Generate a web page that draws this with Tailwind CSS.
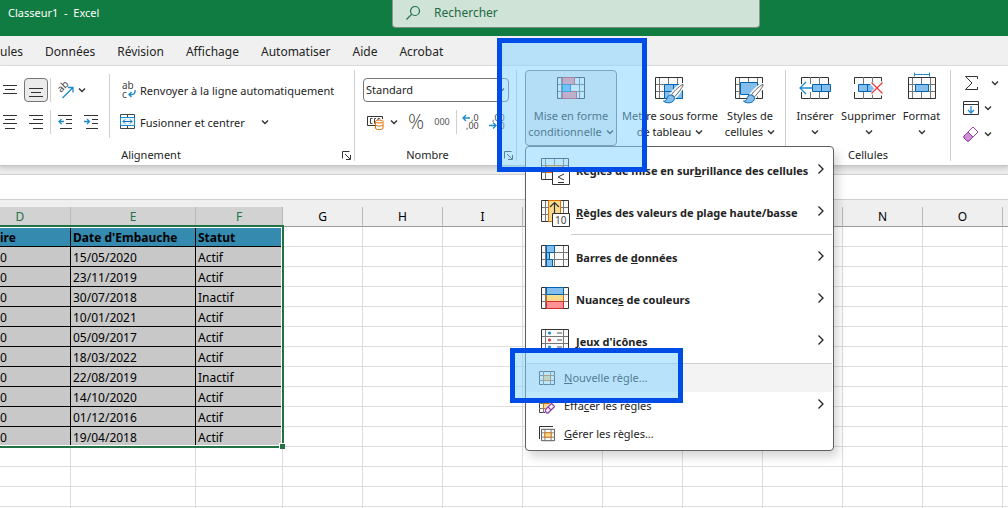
<!DOCTYPE html>
<html lang="fr">
<head>
    <meta charset="UTF-8">
    <meta name="viewport" content="width=device-width, initial-scale=1.0">
    <title>Classeur1 - Excel</title>
    <script src="https://cdn.jsdelivr.net/npm/@tailwindcss/browser@4"></script>
</head>

<body class="bg-white font-['Noto_Sans','Open_Sans',sans-serif] text-[11px] leading-4 text-[#242424]">
    <!-- shared icons -->
    <svg class="hidden">
        <symbol id="down" viewBox="0 0 8 6"><path d="M1 1.500l3 3 3-3" fill="none" stroke="#333" stroke-width="1.400"/></symbol>
        <symbol id="right" viewBox="0 0 8 12"><path d="M1.500 1.500L6 6l-4.500 4.500" fill="none" stroke="#222" stroke-width="1.300"/></symbol>
        <symbol id="launcher" viewBox="0 0 9 9"><path d="M.5 7.500V.5h7M3 3l5 5M8.500 4v4.500H4" fill="none" stroke="#333"/></symbol>
        <symbol id="grid" viewBox="0 0 30 28">
            <path d="M1.500 1.500h27v21h-27z" fill="#fafafa"/>
            <path d="M5.500 1v22M14.500 1v22M23.500 1v22M1 8.500h28M1 15.500h28" fill="none" stroke="#777"/>
            <path d="M1.500 1.500h27v21h-27z" fill="none" stroke="#333"/>
        </symbol>
        <symbol id="brush" viewBox="0 0 22 22">
            <path d="M20.500 1.500c-2 0-9 6.500-12 10.500l3 2.500c3.500-3.500 9.500-11 9-13z" fill="#fff" stroke="#fff" stroke-width="4"/>
            <path d="M20.500 1.500c-2 0-9 6.500-12 10.500l3 2.500c3.500-3.500 9.500-11 9-13z" fill="#fafafa" stroke="#555"/>
            <path d="M8 12.500c-3 0-4 2-4.500 4-.3 1.500-1.500 2.500-3.500 2.500 3 2.500 9 2.500 11-1 1-2 .3-3.500-.5-4z" fill="#83beec" stroke="#0063b1"/>
        </symbol>
        <symbol id="smallgrid" viewBox="0 0 16 16">
            <path d="M.5 1.500h15v13H.5z" fill="#fafafa" stroke="#444"/>
            <path d="M4.500 1v14M11.500 1v14M0 5.500h16M0 10.500h16" fill="none" stroke="#777"/>
            <path d="M4.500 5.500h7v5h-7z" fill="#f8db8f" stroke="#e07000"/>
        </symbol>
    </svg>

    <div class="flex h-screen flex-col overflow-hidden">
        <!-- title bar -->
        <header class="flex h-9 shrink-0 items-start bg-[#107c41]">
            <h1 class="w-[392px] shrink-0 pt-1 pl-2 text-[11px] leading-[18px] whitespace-pre text-white">Classeur1  -  Excel</h1>
            <label class="flex h-7 w-[368px] items-center gap-[13px] rounded-b border border-t-0 border-[#8a9a8f] border-b-[#7c8a80] bg-[#cfe3d7] pb-[2px] pl-3">
                <svg class="size-4 shrink-0" viewBox="0 0 16 16" fill="none" stroke="#1d7044" stroke-width="1.200"><circle cx="10" cy="6" r="4.500"/><path d="M6.800 9.200L1.500 14.500"/></svg>
                <input type="search" placeholder="Rechercher" aria-label="Rechercher" class="w-full text-xs outline-none placeholder:text-[#1d6a42]">
            </label>
        </header>

        <!-- tabs -->
        <nav class="flex h-[30px] shrink-0 items-center gap-[22px] border-b border-[#e4e4e4] bg-[#f0f0f0] pt-[3px] text-xs">
            <a href="#">ules</a>
            <a href="#">Données</a>
            <a href="#">Révision</a>
            <a href="#">Affichage</a>
            <a href="#">Automatiser</a>
            <a href="#">Aide</a>
            <a href="#">Acrobat</a>
        </nav>

        <!-- ribbon -->
        <div class="relative z-10 flex h-[100px] shrink-0 border-b border-[#c6c6c6] bg-white py-1 shadow-[0_2px_5px_rgba(0,0,0,0.16)]">
            <section class="relative flex w-[355px] shrink-0 flex-col border-r border-[#d0d0d0]">
                <div class="flex h-[68px] pt-1">
                    <div class="w-[110px] shrink-0 border-r border-[#d0d0d0]">
                        <div class="flex h-8 items-center">
                            <button aria-label="Aligner au centre" class="w-6 shrink-0 pl-[3px]"><svg class="h-4 w-[14px]" viewBox="0 0 14 16" stroke="#333"><path d="M0 3.500h14M2 7.500h10M0 11.500h14"/></svg></button>
                            <button aria-label="Aligner en bas" class="flex size-6 shrink-0 items-center justify-center rounded border border-[#767676] bg-[#ebebeb]"><svg class="h-4 w-[14px]" viewBox="0 0 14 16" stroke="#333"><path d="M0 6.500h14M2 10.500h10M0 14.500h14"/></svg></button>
                            <span class="ml-[2px] h-6 w-px bg-[#d0d0d0]"></span>
                            <button aria-label="Orientation" class="ml-[6px] flex items-center gap-1">
                                <svg class="h-4 w-[17px] overflow-visible" viewBox="0 0 17 16" fill="none"><text font-size="10" fill="#444" transform="translate(4 11) rotate(-45)">ab</text><path d="M5.500 16L16 5.500M11 5.500h5v5" stroke="#1e8bcd" stroke-width="1.300"/></svg>
                                <svg class="h-[6px] w-2"><use href="#down"/></svg>
                            </button>
                        </div>
                        <div class="flex h-8 items-center">
                            <button aria-label="Centrer" class="w-6 shrink-0 pl-[3px]"><svg class="h-4 w-[14px]" viewBox="0 0 14 16" stroke="#333"><path d="M0 1.500h14M2 5.500h10M0 9.500h14M2 14.500h10"/></svg></button>
                            <button aria-label="Aligner à droite" class="w-6 shrink-0 pl-[5px]"><svg class="h-4 w-[14px]" viewBox="0 0 14 16" stroke="#333"><path d="M0 1.500h14M4 5.500h10M0 9.500h14M4 14.500h10"/></svg></button>
                            <span class="ml-[2px] h-6 w-px bg-[#d0d0d0]"></span>
                            <button aria-label="Diminuer le retrait" class="ml-[7px]"><svg class="h-4 w-[14px]" viewBox="0 0 14 16" fill="none" stroke="#333"><path d="M0 1.500h14M8 5.500h6M8 9.500h6M2 14.500h12"/><path d="M6 7.500H1M3.500 5L1 7.500 3.500 10" stroke="#1e8bcd" stroke-width="1.300"/></svg></button>
                            <button aria-label="Augmenter le retrait" class="ml-3"><svg class="h-4 w-[14px]" viewBox="0 0 14 16" fill="none" stroke="#333"><path d="M0 1.500h14M8 5.500h6M8 9.500h6M2 14.500h12"/><path d="M0 7.500h5M3 5l2.500 2.500L3 10" stroke="#1e8bcd" stroke-width="1.300"/></svg></button>
                        </div>
                    </div>
                    <div class="pl-[10px]">
                        <button class="flex h-8 items-center gap-1 whitespace-nowrap">
                            <svg class="h-[18px] w-4 overflow-visible" viewBox="0 0 16 18" fill="none"><text x="2" y="8" font-size="10" fill="#444">ab</text><text x="2" y="17" font-size="10" fill="#444">c</text><path d="M15 9c.5 3-1 4.500-3 4.500H9M11.500 11L9 13.500l2.500 2.500" stroke="#1e8bcd" stroke-width="1.400"/></svg>
                            <span class="pt-px">Renvoyer à la ligne automatiquement</span>
                        </button>
                        <button class="flex h-8 items-center gap-1 whitespace-nowrap">
                            <svg class="size-4" viewBox="0 0 16 16" fill="none"><path d="M.5.5h14v14H.5zM7.500 0v3M7.500 12v3" stroke="#444"/><path d="M.5 3.500h14v8H.5z" fill="#e8f4fc" stroke="#1e8bcd"/><path d="M3 7.500h9M5 5.500l-2 2 2 2M10 5.500l2 2-2 2" stroke="#1e6fb0"/></svg>
                            <span class="pt-px">Fusionner et centrer</span>
                            <svg class="ml-3 h-[6px] w-2"><use href="#down"/></svg>
                        </button>
                    </div>
                </div>
                <footer class="flex flex-1 items-end justify-center pr-[52px] leading-3">Alignement</footer>
                <button aria-label="Options d'alignement" class="absolute right-[3px] bottom-px"><svg class="size-[9px]"><use href="#launcher"/></svg></button>
            </section>

            <section class="relative flex w-[162px] shrink-0 flex-col border-r border-[#d0d0d0]">
                <div class="h-[68px] pt-1 pl-2">
                    <div class="flex h-8 items-center">
                        <div class="relative w-[146px]">
                            <select aria-label="Format de nombre" class="h-6 w-full appearance-none rounded border border-[#767676] bg-white pl-[2px] text-[11px]"><option>Standard</option></select>
                            <svg class="pointer-events-none absolute top-[9px] right-1 h-[6px] w-2"><use href="#down"/></svg>
                        </div>
                    </div>
                    <div class="flex h-8 items-center">
                        <button aria-label="Format monétaire" class="ml-1 flex shrink-0 items-center gap-[6px]">
                            <svg class="size-[17px]" viewBox="0 0 17 17" fill="none"><path d="M8 11.500H.5v-9h15V5" stroke="#333"/><path d="M5.500 4.500h-2v5h2M9 4.500H7.500v5M12.500 5v-.5h-1.500V6" stroke="#444"/><path d="M8.500 7.500v7c1.500 1.500 6 1.500 7.500 0v-7z" fill="#fff" stroke="#e07000"/><ellipse cx="12.250" cy="7.500" rx="3.750" ry="1.500" fill="#fff" stroke="#e07000"/><path d="M8.500 11c1.500 1.500 6 1.500 7.500 0" stroke="#e07000"/></svg>
                            <svg class="h-[6px] w-2"><use href="#down"/></svg>
                        </button>
                        <button class="ml-[9px] w-[18px] font-['Open_Sans','Noto_Sans',sans-serif] text-xl leading-none font-light text-[#444]">%</button>
                        <button class="ml-2 w-[18px] text-[9px] text-[#555]">000</button>
                        <span class="ml-[5px] h-6 w-px shrink-0 bg-[#d0d0d0]"></span>
                        <button aria-label="Ajouter une décimale" class="ml-[6px] shrink-0"><svg class="size-4 overflow-visible" viewBox="0 0 16 16" fill="none"><text x="8" y="7" font-size="9" fill="#444">,0</text><text x="3" y="15" font-size="9" fill="#444">,00</text><path d="M7 4H0M3 1L0 4l3 3" stroke="#1e8bcd" stroke-width="1.300"/></svg></button>
                        <button aria-label="Réduire les décimales" class="ml-[10px] shrink-0"><svg class="size-4 overflow-visible" viewBox="0 0 16 16" fill="none"><text x="3" y="7" font-size="9" fill="#444">,00</text><text x="8" y="15" font-size="9" fill="#444">,0</text><path d="M0 11.500h7M4 8.500l3 3-3 3" stroke="#1e8bcd" stroke-width="1.300"/></svg></button>
                    </div>
                </div>
                <footer class="flex flex-1 items-end justify-center pr-4 leading-3">Nombre</footer>
                <button aria-label="Options de nombre" class="absolute right-[3px] bottom-px"><svg class="size-[9px]"><use href="#launcher"/></svg></button>
            </section>

            <section class="flex w-[269px] shrink-0 items-start border-r border-[#d0d0d0] pl-2">
                <div class="relative shrink-0">
                    <button aria-expanded="true" class="flex h-[76px] w-[92px] flex-col items-center rounded border border-[#767676] bg-[#ebebeb] pt-[5px] whitespace-nowrap">
                        <svg class="h-7 w-[30px]" viewBox="0 0 30 28"><use href="#grid"/><path d="M6.500 1.500h12v7h-12zM6.500 15.500h14v7h-14z" fill="#ff8f96" stroke="#d13438"/><path d="M6.500 8.500h8v7h-8z" fill="#6bb0ea" stroke="#0078d4"/></svg>
                        <span class="mt-1">Mise en forme</span>
                        <span class="flex items-center gap-1">conditionnelle <svg class="h-[6px] w-2"><use href="#down"/></svg></span>
                    </button>

                    <!-- conditional formatting menu -->
                    <div role="menu" class="absolute top-full left-0 w-[309px] rounded border border-[#606060] bg-white pt-[3px] pb-[2px] font-bold shadow-[4px_6px_10px_rgba(0,0,0,0.16)]">
                        <button role="menuitem" class="flex h-[42px] w-full items-center gap-[5px] pr-2 pl-[14px] whitespace-nowrap">
                            <svg class="h-7 w-[31px] shrink-0" viewBox="0 0 31 28"><use href="#grid" width="30" height="28"/><path d="M6.500 8.500h16v7h-16z" fill="#f8db8f" stroke="#e07000"/><path d="M12.500 14.500h17v13h-17z" fill="#fff" stroke="#333"/><path d="M24 17l-6 3 6 3M18 25.500h6" fill="none" stroke="#333"/></svg>
                            <span class="flex-1 text-left">Règles de mise en sur<u>b</u>rillance des cellules</span>
                            <svg class="mb-1 h-3 w-2 shrink-0"><use href="#right"/></svg>
                        </button>
                        <button role="menuitem" class="flex h-[42px] w-full items-center gap-[5px] pr-2 pl-[14px] whitespace-nowrap">
                            <svg class="h-7 w-[31px] shrink-0" viewBox="0 0 31 28"><use href="#grid" width="30" height="28"/><path d="M8.500 1.500h12v21h-12z" fill="#f8db8f" stroke="#e07000"/><path d="M14.500 15V4M10 8l4.500-4.500L19 8" fill="none" stroke="#333" stroke-width="1.200"/><path d="M12.500 14.500h17v13h-17z" fill="#fff" stroke="#333"/><text x="15" y="25" font-size="10" font-weight="400" fill="#444">10</text></svg>
                            <span class="flex-1 text-left"><u>R</u>ègles des valeurs de plage haute/basse</span>
                            <svg class="mb-1 h-3 w-2 shrink-0"><use href="#right"/></svg>
                        </button>
                        <hr class="mr-px mb-[2px] ml-[45px] border-[#cfcfcf]">
                        <button role="menuitem" class="flex h-[42px] w-full items-center gap-[5px] pr-2 pl-[14px] whitespace-nowrap">
                            <svg class="h-7 w-[31px] shrink-0" viewBox="0 0 31 28"><use href="#grid" width="30" height="28"/><path d="M6.500 1.500h8v7h-8zM6.500 8.500h3v7h-3zM6.500 15.500h6v7h-6z" fill="#83beec" stroke="#0063b1"/></svg>
                            <span class="flex-1 text-left">Barres de <u>d</u>onnées</span>
                            <svg class="mb-1 h-3 w-2 shrink-0"><use href="#right"/></svg>
                        </button>
                        <button role="menuitem" class="flex h-[42px] w-full items-center gap-[5px] pr-2 pl-[14px] whitespace-nowrap">
                            <svg class="h-7 w-[31px] shrink-0" viewBox="0 0 31 28"><use href="#grid" width="30" height="28"/><path d="M6.500 8.500h17v7h-17z" fill="#f8db8f" stroke="#e07000"/><path d="M6.500 1.500h17v7h-17z" fill="#83beec" stroke="#0063b1"/><path d="M6.500 15.500h17v7h-17z" fill="#ff9197" stroke="#d92c2c"/></svg>
                            <span class="flex-1 text-left">Nuance<u>s</u> de couleurs</span>
                            <svg class="mb-1 h-3 w-2 shrink-0"><use href="#right"/></svg>
                        </button>
                        <button role="menuitem" class="flex h-[42px] w-full items-center gap-[5px] pr-2 pl-[14px] whitespace-nowrap">
                            <svg class="h-7 w-[31px] shrink-0" viewBox="0 0 31 28"><path d="M1.500 1.500h27v21h-27z" fill="#fafafa"/><path d="M5.500 1v22M23.500 1v22M1 8.500h28M1 15.500h28" stroke="#777"/><path d="M1.500 1.500h27v21h-27z" fill="none" stroke="#333"/><path d="M17 5h5M17 12h5M17 19h5" stroke="#555"/><circle cx="9.500" cy="5" r="1.600" fill="#1e8bcd"/><circle cx="9.500" cy="12" r="1.600" fill="#e83b3b"/><circle cx="9.500" cy="19" r="1.600" fill="#1e8bcd"/></svg>
                            <span class="flex-1 text-left"><u>J</u>eux d'icônes</span>
                            <svg class="mb-1 h-3 w-2 shrink-0"><use href="#right"/></svg>
                        </button>
                        <hr class="mx-px border-[#cfcfcf]">
                        <div class="relative mr-px font-normal">
                            <button role="menuitem" class="flex h-7 w-full items-center gap-[9px] bg-[#f3f3f3] pl-[13px]">
                                <svg class="size-4"><use href="#smallgrid"/></svg>
                                <span><u>N</u>ouvelle règle...</span>
                            </button>
                            <div class="pointer-events-none absolute -top-4 -left-4 z-10 h-[55px] w-[173px] border-5 border-[#004ce6] bg-[#7dd1ff]/50"></div>
                        </div>
                        <button role="menuitem" class="flex h-7 w-full items-center gap-[9px] pr-2 pl-[13px] font-normal">
                            <svg class="size-4" viewBox="0 0 16 16"><use href="#smallgrid"/><path d="M5 12l7-8h4v12H7z" fill="#fff"/><path d="M6.500 11.500l6-6 3 3-6.500 6.500H8l-1.500-1.500z" fill="#fff" stroke="#9b3fa8" stroke-width="1.300"/><path d="M9 9l3 3" stroke="#9b3fa8" stroke-width="1.300"/></svg>
                            <span class="flex-1 text-left">Effa<u>c</u>er les règles</span>
                            <svg class="mb-1 h-3 w-2 shrink-0"><use href="#right"/></svg>
                        </button>
                        <button role="menuitem" class="flex h-7 w-full items-center gap-[9px] pl-[13px] font-normal">
                            <svg class="size-4" viewBox="0 0 16 16"><path d="M.5 13V.5H14" fill="none" stroke="#333"/><svg x="2" y="2" width="14" height="14"><use href="#smallgrid"/></svg></svg>
                            <span><u>G</u>érer les règles...</span>
                        </button>
                    </div>

                    <div class="pointer-events-none absolute -top-8 -left-7 z-10 h-[134px] w-[150px] border-5 border-[#004ce6] bg-[#7dd1ff]/50"></div>
                </div>
                <button class="flex h-[76px] w-[106px] shrink-0 flex-col items-center pt-[6px] whitespace-nowrap">
                    <svg class="h-7 w-8" viewBox="0 0 32 28"><use href="#grid" width="30" height="28"/><path d="M10.500 8.500h18v14h-18z" fill="#83beec" stroke="#0063b1"/><path d="M19.500 8v15M10 15.500h19" stroke="#0063b1"/><use href="#brush" x="9" y="7" width="22" height="21"/></svg>
                    <span class="mt-1">Mettre sous forme</span>
                    <span class="flex items-center gap-1">de tableau <svg class="h-[6px] w-2"><use href="#down"/></svg></span>
                </button>
                <button class="flex h-[76px] w-[54px] shrink-0 flex-col items-center pt-[6px] whitespace-nowrap">
                    <svg class="h-7 w-8" viewBox="0 0 32 28"><use href="#grid" width="30" height="28"/><path d="M6.500 6.500h17v12h-17z" fill="#83beec" stroke="#0063b1"/><use href="#brush" x="9" y="7" width="22" height="21"/></svg>
                    <span class="mt-1">Styles de</span>
                    <span class="flex items-center gap-1">cellules <svg class="h-[6px] w-2"><use href="#down"/></svg></span>
                </button>
            </section>

            <section class="flex w-[165px] shrink-0 flex-col border-r border-[#d0d0d0]">
                <div class="flex h-[68px] items-start pl-[2px]">
                    <button class="flex w-[54px] shrink-0 flex-col items-center pt-[6px]">
                        <svg class="h-7 w-8" viewBox="0 0 32 28"><path d="M2.500 1.500h27v21h-27z" fill="#fafafa" stroke="#333"/><path d="M11.500 1v7M20.500 1v7M11.500 16v7M20.500 16v7" stroke="#777"/><path d="M1 8h31v8H1z" fill="#fff"/><path d="M13.500 8.500h18v7h-18zM22.500 8.500v7" fill="#83beec" stroke="#0063b1"/><path d="M13 12H1M7 6l-6 6 6 6" fill="none" stroke="#1e8bcd" stroke-width="1.300"/></svg>
                        <span class="mt-1">Insérer</span>
                        <svg class="mt-[5px] h-[6px] w-2"><use href="#down"/></svg>
                    </button>
                    <button class="flex w-[53px] shrink-0 flex-col items-center pt-[6px]">
                        <svg class="h-7 w-8" viewBox="0 0 32 28"><path d="M1.500 1.500h27v21h-27z" fill="#fafafa" stroke="#333"/><path d="M10.500 1v7M19.500 1v7M10.500 16v7M19.500 16v7" stroke="#777"/><path d="M0 8h32v8H0z" fill="#fff"/><path d="M5.500 8.500h15l3 3.500-3 3.500h-15zM14.500 8.500v7" fill="#83beec" stroke="#0063b1"/><path d="M17 6l13 13M30 6L17 19" stroke="#fff" stroke-width="3"/><path d="M18.500 6.500l11 11M29.500 6.500l-11 11" stroke="#e83b3b" stroke-width="1.300"/></svg>
                        <span class="mt-1">Supprimer</span>
                        <svg class="mt-[5px] h-[6px] w-2"><use href="#down"/></svg>
                    </button>
                    <button class="flex w-[53px] shrink-0 flex-col items-center pt-[2px]">
                        <svg class="h-8 w-[30px]" viewBox="0 0 30 32"><use href="#grid" y="4" width="30" height="28"/><path d="M7.500 2.500h15M7.500 .5v4M22.500 .5v4" stroke="#1e8bcd"/><path d="M8.500 12.500h13v7h-13z" fill="#83beec" stroke="#0063b1"/></svg>
                        <span class="mt-1">Format</span>
                        <svg class="mt-[5px] h-[6px] w-2"><use href="#down"/></svg>
                    </button>
                </div>
                <footer class="flex flex-1 items-end justify-center leading-3">Cellules</footer>
            </section>

            <section class="flex flex-col pl-3">
                <button aria-label="Somme automatique" class="flex h-[25px] items-center gap-3">
                    <svg class="size-4" viewBox="0 0 16 16" fill="none" stroke="#333"><path d="M14.500 4V1.500h-12l6.500 6.500-6.500 6.500h12V12"/></svg>
                    <svg class="h-[6px] w-2"><use href="#down"/></svg>
                </button>
                <button aria-label="Remplissage" class="flex h-[26px] items-center gap-[5px]">
                    <svg class="size-4" viewBox="0 0 16 16" fill="none" stroke="#333"><path d="M.5 1.500h15v13H.5zM.5 4.500h15"/><path d="M8 6v7M5 10l3 3 3-3" stroke="#1e8bcd" stroke-width="1.300"/></svg>
                    <svg class="h-[6px] w-2"><use href="#down"/></svg>
                </button>
                <button aria-label="Effacer" class="flex h-[26px] items-center gap-[5px]">
                    <svg class="size-4" viewBox="0 0 16 16" stroke="#9b3fa8"><path d="M1 10l9-9 5 5-9 9H4l-3-3z" fill="#fff"/><path d="M1 10l4-4 5 5-4 4H4l-3-3z" fill="#cf8fd6"/></svg>
                    <svg class="h-[6px] w-2"><use href="#down"/></svg>
                </button>
            </section>
        </div>

        <!-- formula bar -->
        <div class="shrink-0 border-b border-[#cfcfcf] bg-[#ececec] pt-2">
            <input aria-label="Barre de formule" class="block h-[25px] w-full border-t border-[#cfcfcf] bg-white outline-none">
        </div>

        <!-- sheet -->
        <main class="relative flex-1 overflow-hidden bg-[#efefef] pt-[7px]">
            <table class="w-[1083px] table-fixed border-separate border-spacing-0 bg-white text-xs whitespace-nowrap">
                <colgroup>
                    <col class="w-[71px]"><col class="w-[125px]"><col class="w-[87px]">
                    <col><col><col><col><col><col><col><col><col><col>
                </colgroup>
                <thead class="leading-[19px] [&_th]:h-5 [&_th]:border-r [&_th]:border-b [&_th]:border-[#9c9c9c] [&_th]:border-r-[#b8b8b8] [&_th]:bg-[#efefef] [&_th]:p-0 [&_th]:font-normal [&_th]:text-black">
                    <tr id="letters"></tr>
                </thead>
                <tbody id="cells" class="leading-[17px] text-black [&_td]:h-5 [&_td]:border-r [&_td]:border-b [&_td]:border-[#dedede] [&_td]:p-0 [&_td]:pt-[2px] [&_th]:h-5 [&_th]:border-r [&_th]:border-b [&_th]:border-black [&_th]:p-0 [&_th]:pt-[2px] [&_th]:text-left"></tbody>
            </table>
            <!-- selection frame -->
            <div class="pointer-events-none absolute top-[25px] -left-1 h-[223px] w-[288px] border-2 border-[#217346]">
                <div class="h-full border border-white"></div>
                <span class="absolute -right-[3px] -bottom-[3px] size-[6px] border-t border-l border-white bg-[#217346]"></span>
            </div>
        </main>
    </div>

    <script>
        const letters = ['D', 'E', 'F', 'G', 'H', 'I', '', '', '', '', 'N', 'O', ''];
        const rows = [
            ['15/05/2020', 'Actif'],
            ['23/11/2019', 'Actif'],
            ['30/07/2018', 'Inactif'],
            ['10/01/2021', 'Actif'],
            ['05/09/2017', 'Actif'],
            ['18/03/2022', 'Actif'],
            ['22/08/2019', 'Inactif'],
            ['14/10/2020', 'Actif'],
            ['01/12/2016', 'Actif'],
            ['19/04/2018', 'Actif'],
        ];
        const blank = (n) => '<td></td>'.repeat(n);

        document.getElementById('letters').innerHTML = letters.map((c, i) => {
            if (i > 2) return `<th scope="col">${c}</th>`;
            // column D starts off screen, its letter sits left of the visible middle
            return `<th scope="col"><div class="-mb-px h-5 bg-[#d2d2d2] text-[#217346] ${i === 0 ? 'pr-[30px]' : ''}">${c}</div></th>`;
        }).join('');

        let html = `<tr>
            <th class="bg-[#358ab0]">ire</th>
            <th class="bg-[#358ab0]"><div class="pl-[2px]">Date d'Embauche</div></th>
            <th class="bg-[#358ab0]"><div class="pl-[2px]">Statut</div></th>
            ${blank(10)}</tr>`;
        rows.forEach(([date, status]) => {
            html += `<tr>
                <td class="border-black! bg-[#c8c8c8]">0</td>
                <td class="border-black! bg-[#c8c8c8]"><div class="pl-[2px]">${date}</div></td>
                <td class="border-black! bg-[#c8c8c8]"><div class="pl-[2px]">${status}</div></td>
                ${blank(10)}</tr>`;
        });
        for (let i = 0; i < 5; i++) html += `<tr>${blank(13)}</tr>`;
        document.getElementById('cells').innerHTML = html;
    </script>
</body>
</html>
